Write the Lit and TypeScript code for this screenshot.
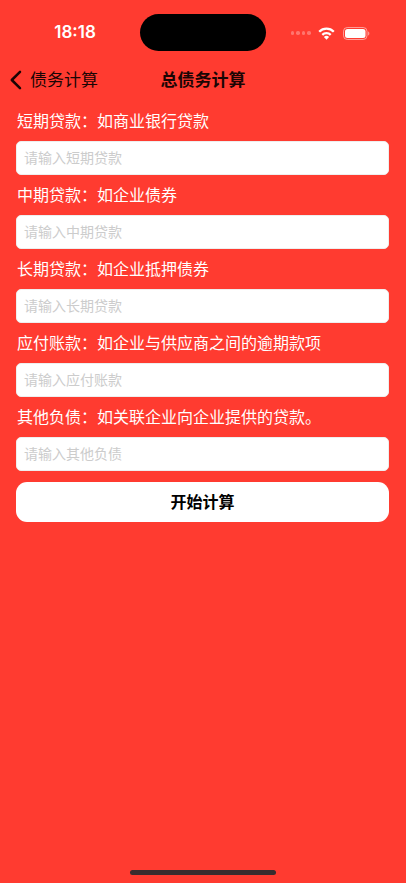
import { LitElement, html, css } from "lit";
import { customElement } from "lit/decorators.js";

const rows = [
  ["短期贷款：如商业银行贷款", "请输入短期贷款"],
  ["中期贷款：如企业债券", "请输入中期贷款"],
  ["长期贷款：如企业抵押债券", "请输入长期贷款"],
  ["应付账款：如企业与供应商之间的逾期款项", "请输入应付账款"],
  ["其他负债：如关联企业向企业提供的贷款。", "请输入其他负债"],
];

@customElement("app-root")
export class AppRoot extends LitElement {
  static styles = css`
    :host {
      display: flex;
      flex-direction: column;
      width: 406px;
      height: 883px;
      overflow: hidden;
      background: #ff3b30;
      font-family: "Noto Sans CJK SC", "Liberation Sans", sans-serif;
      position: relative;
    }
    .status {
      height: 58px;
      flex: none;
      display: grid;
      grid-template-columns: 140px 126px 140px;
      align-items: start;
      padding-top: 14px;
      box-sizing: border-box;
    }
    .time {
      font-family: Inter, "Liberation Sans", sans-serif;
      font-size: 17px;
      font-weight: 600;
      color: #fff;
      text-align: center;
      padding-left: 10px;
      line-height: 20px;
      margin-top: 8px;
    }
    .island {
      height: 37px;
      border-radius: 19px;
      background: #000;
    }
    .sys {
      display: flex;
      align-items: center;
      padding-left: 25px;
      margin-top: 12.500px;
    }
    .dots {
      display: flex;
      gap: 2px;
      margin-right: 7px;
    }
    .dots i {
      width: 3.4px;
      height: 3.4px;
      border-radius: 50%;
      background: rgba(255, 255, 255, 0.3);
    }
    .wifi {
      display: block;
      margin-right: 8px;
    }
    .nav {
      height: 43px;
      flex: none;
      display: grid;
      grid-template-columns: 1fr auto 1fr;
      align-items: center;
      color: #1a0504;
      font-size: 17px;
      line-height: 24px;
    }
    .back {
      display: flex;
      align-items: center;
      padding-left: 9px;
      gap: 8px;
    }
    .back svg {
      display: block;
    }
    .back span,
    .title {
      padding-bottom: 2px;
    }
    .title {
      font-weight: 600;
    }
    .form {
      display: flex;
      flex-direction: column;
      padding: 0 17px 0 16px;
    }
    .label {
      height: 40px;
      box-sizing: border-box;
      padding: 0 0 2px 1px;
      display: flex;
      align-items: center;
      color: #fff;
      font-size: 16px;
      white-space: nowrap;
    }
    .field {
      height: 34px;
      box-sizing: border-box;
      background: #fff;
      border-radius: 5px;
      border: 1px solid #eeeeee;
      padding: 0 7px 2px 7px;
      display: flex;
      align-items: center;
      font-size: 14px;
      color: #cccccc;
    }
    .btn {
      height: 40px;
      box-sizing: border-box;
      margin-top: 11px;
      padding-bottom: 2px;
      background: #fff;
      border-radius: 11px;
      display: flex;
      align-items: center;
      justify-content: center;
      color: #000;
      font-size: 16px;
      font-weight: 700;
    }
    .home {
      position: absolute;
      left: 130px;
      bottom: 8px;
      width: 146px;
      height: 5px;
      border-radius: 3px;
      background: #3a2c2e;
    }
  `;

  render() {
    return html`
      <div class="status">
        <div class="time">18:18</div>
        <div class="island"></div>
        <div class="sys">
          <div class="dots"><i></i><i></i><i></i><i></i></div>
          <svg class="wifi" width="17" height="13" viewBox="0 0 17 13">
            <path fill="none" stroke="#fff" stroke-width="2.300" d="M1.200 4.700A10.300 10.300 0 0 1 15.800 4.700"/>
            <path fill="none" stroke="#fff" stroke-width="2.300" d="M4.300 7.900A5.900 5.900 0 0 1 12.700 7.900"/>
            <path fill="#fff" d="M8.500 12.700 5.900 10A3.700 3.700 0 0 1 11.100 10z"/>
          </svg>
          <svg width="27" height="13" viewBox="0 0 27 13">
            <rect x="0.5" y="0.5" width="23.5" height="12" rx="3.8" fill="none" stroke="#fff" stroke-opacity="0.5"/>
            <rect x="2" y="2" width="20.5" height="9" rx="2.5" fill="#fff"/>
            <path d="M25 4.500c.9.3 1.400 1 1.400 2s-.5 1.700-1.400 2z" fill="#fff" fill-opacity="0.45"/>
          </svg>
        </div>
      </div>
      <div class="nav">
        <div class="back">
          <svg width="13" height="20" viewBox="0 0 13 20">
            <path d="M11 1.800 2.800 10 11 18.200" fill="none" stroke="#1a0504" stroke-width="2.500" stroke-linecap="round" stroke-linejoin="round"/>
          </svg>
          <span>债务计算</span>
        </div>
        <div class="title">总债务计算</div>
        <div></div>
      </div>
      <div class="form">
        ${rows.map(
          ([label, ph]) => html`
            <div class="label">${label}</div>
            <div class="field">${ph}</div>
          `
        )}
        <div class="btn">开始计算</div>
      </div>
      <div class="home"></div>
    `;
  }
}
